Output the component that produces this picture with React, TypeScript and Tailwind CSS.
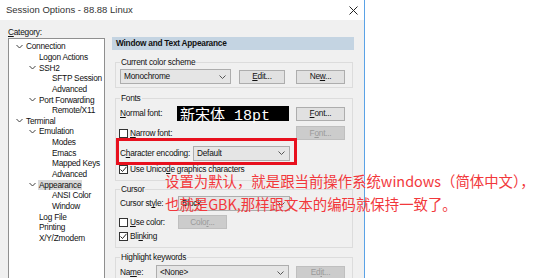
import React from "react";

type Node = { label: string; level: number; open?: boolean; selected?: boolean };

const tree: Node[] = [
  { label: "Connection", level: 0, open: true },
  { label: "Logon Actions", level: 1 },
  { label: "SSH2", level: 1, open: true },
  { label: "SFTP Session", level: 2 },
  { label: "Advanced", level: 2 },
  { label: "Port Forwarding", level: 1, open: true },
  { label: "Remote/X11", level: 2 },
  { label: "Terminal", level: 0, open: true },
  { label: "Emulation", level: 1, open: true },
  { label: "Modes", level: 2 },
  { label: "Emacs", level: 2 },
  { label: "Mapped Keys", level: 2 },
  { label: "Advanced", level: 2 },
  { label: "Appearance", level: 1, open: true, selected: true },
  { label: "ANSI Color", level: 2 },
  { label: "Window", level: 2 },
  { label: "Log File", level: 1 },
  { label: "Printing", level: 1 },
  { label: "X/Y/Zmodem", level: 1 },
];

const indent = ["pl-[7px]", "pl-[20px]", "pl-[33px]"];

function Chevron() {
  return (
    <svg width="7" height="5" viewBox="0 0 7 5" className="shrink-0">
      <polyline points="0.5,1 3.5,4 6.5,1" fill="none" stroke="#404040" strokeWidth="1" />
    </svg>
  );
}

function Check({ checked }: { checked?: boolean }) {
  return (
    <div className="w-[9px] h-[9px] border border-[#333] bg-white flex items-center justify-center shrink-0">
      {checked && (
        <svg width="7" height="7" viewBox="0 0 7 7">
          <polyline points="0.5,3.5 2.5,5.5 6.5,0.8" fill="none" stroke="#222" strokeWidth="1" />
        </svg>
      )}
    </div>
  );
}

function Select({ value, w }: { value: string; w: string }) {
  return (
    <div className={`${w} h-[15px] bg-[#e5e5e5] border border-[#adadad] flex items-center justify-between pl-[3px] pr-[4px] shrink-0`}>
      <span>{value}</span>
      <svg width="7" height="4" viewBox="0 0 7 4">
        <polyline points="0.5,0.5 3.5,3.5 6.5,0.5" fill="none" stroke="#555" strokeWidth="1" />
      </svg>
    </div>
  );
}

function Btn({ children, disabled, w = "w-[49px]" }: { children: React.ReactNode; disabled?: boolean; w?: string }) {
  return (
    <div
      className={`${w} h-[14px] border flex items-center justify-center shrink-0 ${
        disabled ? "bg-[#cccccc] border-[#bfbfbf] text-[#9a9a9a]" : "bg-[#e1e1e1] border-[#adadad] text-[#111]"
      }`}
    >
      {children}
    </div>
  );
}

function Group({ title, className, children }: { title: string; className?: string; children: React.ReactNode }) {
  return (
    <fieldset className={`border border-[#dcdcdc] ml-[3px] mr-[1px] pl-[3px] pr-[7px] ${className ?? ""}`}>
      <legend className="ml-[1px] px-[1px] leading-[10px] h-[10px]">{title}</legend>
      {children}
    </fieldset>
  );
}

export default function App() {
  return (
    <div
      className="w-[557px] h-[278px] bg-white flex overflow-hidden relative text-[8.3px] tracking-[-0.25px] text-[#111] whitespace-nowrap"
      style={{ fontFamily: '"Liberation Sans", Arial, sans-serif' }}
    >
      <div className="w-[365px] h-full border-r border-[#5aa2e6] bg-[#f0f0f0] flex flex-col shrink-0">
        <div className="h-[20px] shrink-0 bg-white flex items-center justify-between pl-[6px] pr-[6px] text-[9.5px] tracking-normal text-[#333]">
          <span>Session Options - 88.88 Linux</span>
          <svg width="9" height="9" viewBox="0 0 9 9">
            <path d="M0.5 0.5 L8.5 8.5 M8.5 0.5 L0.5 8.5" stroke="#222" strokeWidth="1" />
          </svg>
        </div>
        <div className="flex-1 min-h-0 flex pl-[8px]">
          <div className="w-[97px] flex flex-col pt-[6px] shrink-0">
            <div className="h-[12px] leading-[12px] shrink-0">
              <span className="underline">C</span>ategory:
            </div>
            <div className="flex-1 bg-white border border-[#8f8f8f] border-b-0 pt-[2px]">
              {tree.map((n, i) => (
                <div key={i} className={`h-[10.65px] flex items-center ${indent[n.level]}`}>
                  <div className="w-[9px] flex items-center">{n.open && <Chevron />}</div>
                  <span className={`px-[1px] leading-[10px] ${n.selected ? "bg-[#d9d9d9]" : ""}`}>{n.label}</span>
                </div>
              ))}
            </div>
          </div>
          <div className="w-[242px] ml-[7px] mt-[17px] flex flex-col">
            <div className="h-[13px] shrink-0 bg-[#c4d4e2] flex items-center pl-[4px] font-bold">Window and Text Appearance</div>

            <Group title="Current color scheme" className="mt-[7px] pt-[2px] pb-[3px] shrink-0">
              <div className="flex items-center pl-[1px]">
                <Select value="Monochrome" w="w-[111px]" />
                <Btn w="w-[46px] ml-[8px]">
                  <span><span className="underline">E</span>dit...</span>
                </Btn>
                <Btn w="w-[49px] ml-[11px]">
                  <span>Ne<span className="underline">w</span>...</span>
                </Btn>
              </div>
            </Group>

            <Group title="Fonts" className="mt-[5px] pt-[3px] pb-[6px] shrink-0">
              <div className="flex items-center h-[15px]">
                <span className="w-[58px] pl-[1px]"><span className="underline">N</span>ormal font:</span>
                <div className="w-[112px] h-[15px] bg-black text-white text-[15px] leading-[15px] pl-[3px] tracking-normal">
                  <span style={{ fontFamily: '"Noto Sans CJK SC", sans-serif' }}>新宋体</span>
                  <span style={{ fontFamily: '"Liberation Mono", monospace' }}> 18pt</span>
                </div>
                <Btn w="w-[49px] ml-[7px]">
                  <span><span className="underline">F</span>ont...</span>
                </Btn>
              </div>
              <div className="flex items-center h-[14px] mt-[5px]">
                <div className="w-[170px] flex items-center gap-[2px]">
                  <Check />
                  <span><span className="underline">N</span>arrow font:</span>
                </div>
                <Btn disabled w="w-[49px] ml-[7px]">
                  <span>F<span className="underline">o</span>nt...</span>
                </Btn>
              </div>
              <div className="flex items-center h-[14px] mt-[6px]">
                <span className="w-[74px] pl-[1px]">C<span className="underline">h</span>aracter encoding:</span>
                <Select value="Default" w="w-[97px]" />
              </div>
              <div className="flex items-center gap-[2px] h-[10px] mt-[4px]">
                <Check checked />
                <span>Use Unico<span className="underline">d</span>e graphics characters</span>
              </div>
            </Group>

            <Group title="Cursor" className="mt-[3px] pt-[2px] pb-[6px] shrink-0">
              <div className="flex items-center h-[15px]">
                <span className="w-[59px] pl-[1px]">Cursor st<span className="underline">y</span>le:</span>
                <Select value="Block" w="w-[112px]" />
              </div>
              <div className="flex items-center h-[14px] mt-[4px]">
                <div className="w-[59px] flex items-center gap-[2px]">
                  <Check />
                  <span><span className="underline">U</span>se color:</span>
                </div>
                <Btn disabled>
                  <span>Colo<span className="underline">r</span>...</span>
                </Btn>
              </div>
              <div className="flex items-center gap-[2px] h-[10px] mt-[2px]">
                <Check checked />
                <span>Bli<span className="underline">n</span>king</span>
              </div>
            </Group>

            <Group title="Highlight keywords" className="mt-[4px] pt-[3px] pb-[4px] shrink-0">
              <div className="flex items-center h-[15px]">
                <span className="w-[37px] pl-[1px]">Na<span className="underline">m</span>e:</span>
                <Select value="<None>" w="w-[133px]" />
                <Btn disabled w="w-[49px] ml-[7px]">
                  <span>Ed<span className="underline">i</span>t...</span>
                </Btn>
              </div>
            </Group>
          </div>
        </div>
      </div>

      <div className="absolute left-[116px] top-[138px] w-[181px] h-[27px] border-[3px] border-[#e8101e]" />
      <div
        className="absolute left-[165px] top-[169px] text-[14.4px] leading-[23px] tracking-normal text-[#f2383c]"
        style={{ fontFamily: '"Noto Sans CJK SC", "Noto Sans", sans-serif' }}
      >
        <div>设置为默认，就是跟当前操作系统windows（简体中文），</div>
        <div>也就是GBK,那样跟文本的编码就保持一致了。</div>
      </div>
    </div>
  );
}
